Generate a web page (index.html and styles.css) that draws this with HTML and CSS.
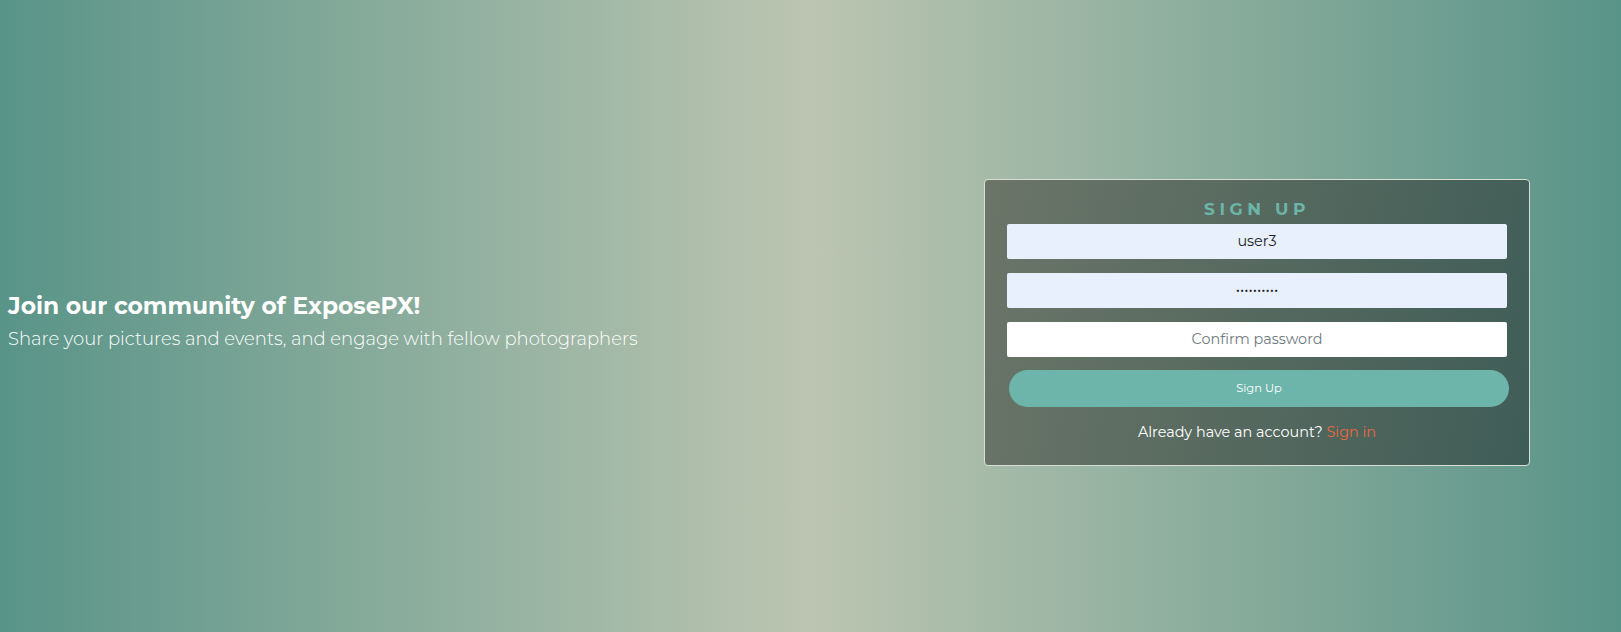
FILE: index.html
```html
<!DOCTYPE html>
<html lang="en">
<head>
<meta charset="utf-8">
<title>ExposePX - Sign up</title>
<link rel="stylesheet" href="styles.css">
</head>
<body>
<main class="page">
  <section class="intro">
    <h1 class="intro-title">Join our community of ExposePX!</h1>
    <p class="intro-text">Share your pictures and events, and engage with fellow photographers</p>
  </section>
  <section class="card">
    <h2 class="card-title">SIGN UP</h2>
    <form class="form">
      <input class="field filled" type="text" value="user3" placeholder="Username">
      <input class="field filled" type="password" value="password12" placeholder="Password">
      <input class="field" type="password" placeholder="Confirm password">
      <button class="btn" type="button">Sign Up</button>
    </form>
    <p class="switch">Already have an account? <a class="switch-link" href="#">Sign in</a></p>
  </section>
</main>
</body>
</html>
```
FILE: styles.css
```css
* { box-sizing: border-box; }
html, body { margin: 0; padding: 0; }
body {
  font-family: "Montserrat", "DejaVu Sans", "Open Sans", sans-serif;
  color: #fff;
}
.page {
  min-height: 632px;
  display: flex;
  align-items: center;
  padding: 12px 91px 0 8px;
  background: linear-gradient(to right, #599488 0%, #bcc5b1 50%, #599488 100%);
}
.intro { flex: 1; }
.intro-title {
  margin: 0;
  font-size: 23.4px;
  font-weight: 700;
  line-height: 28px;
}
.intro-text {
  margin: 6px 0 0;
  font-size: 18px;
  font-weight: 300;
  line-height: 27px;
}
.card {
  width: 546px;
  border: 1px solid #d8ddd6;
  border-radius: 4px;
  padding: 17px 22px 21px 22px;
  background: linear-gradient(100deg, #6b7568 0%, #586a60 45%, #3f5d57 100%);
}
.card-title {
  margin: 0 0 3px;
  text-align: center;
  font-size: 17px;
  font-weight: 700;
  letter-spacing: 4.6px;
  line-height: 24px;
  color: #6cb5a9;
}
.form { display: flex; flex-direction: column; }
.field {
  height: 35px;
  margin-bottom: 14px;
  border: none;
  border-radius: 2px;
  background: #fff;
  text-align: center;
  font-family: inherit;
  font-size: 14.4px;
  color: #222;
  outline: none;
}
.field.filled { background: #e8f0fe; }
.field::placeholder { color: #6f7a80; }
.field:last-of-type { margin-bottom: 13px; }
.btn {
  height: 37px;
  margin: 0 -2px 0 2px;
  border: none;
  border-radius: 19px;
  background: #6db5aa;
  color: #fff;
  font-family: inherit;
  font-size: 11.5px;
}
.switch {
  margin: 13px 0 0;
  text-align: center;
  font-size: 14.4px;
  line-height: 24px;
}
.switch-link { color: #e8693f; text-decoration: none; }
```
